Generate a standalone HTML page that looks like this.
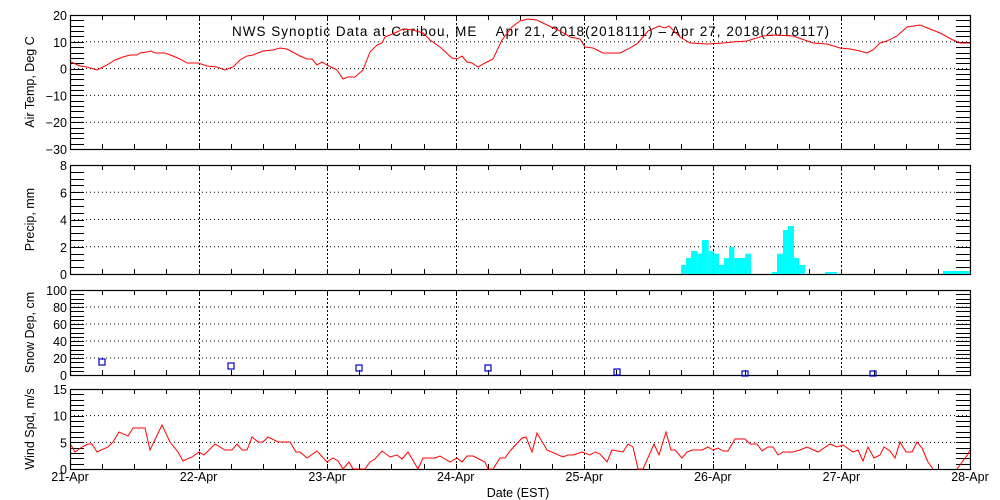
<!DOCTYPE html>
<html><head><meta charset="utf-8"><style>
html,body{margin:0;padding:0;background:#fff;}
svg{display:block;font-family:"Liberation Sans",sans-serif;}
text{font-size:12.5px;fill:#000;}
</style></head><body>
<svg id="s" width="1000" height="500" xmlns="http://www.w3.org/2000/svg">
<g id="g"></g>
<text x="232" y="36" style="font-size:13.5px;white-space:pre" xml:space="preserve" textLength="597" lengthAdjust="spacing">NWS Synoptic Data at Caribou, ME    Apr 21, 2018(2018111) – Apr 27, 2018(2018117)</text>
<polyline fill="none" stroke="#f00" stroke-width="1" points="71,62 80,66 87,67 97,70 107,65 115,60 123,57 130,55 137,55 140,53 147,52 151,51 155,53 165,53 173,56 180,59 187,63 198,63 207,66 217,67 225,70 233,67 240,60 247,56 253,55 263,51 273,50 280,48 287,49 300,56 307,59 312,59 317,65 322,62 327,65 337,70 343,79 348,77 355,77 363,70 370,52 377,45 382,43 385,37 397,32 403,29 413,30 423,33 430,40 440,47 452,58 457,59 462,56 467,62 472,63 478,67 485,63 493,59 502,40 512,27 520,21 528,19 537,20 547,25 560,31 570,37 580,39 585,47 593,48 603,53 620,53 630,48 638,43 648,31 659,26 665,28 669,26 680,37 690,43 707,44 723,43 733,42 747,41 763,36 773,35 793,36 813,43 827,44 840,48 850,49 860,51 867,53 873,50 880,43 887,41 897,36 907,27 920,25 930,29 940,33 953,40 960,43 970,43"/>
<g fill="#00ffff" id="bars"></g>
<g fill="none" stroke="#0000cc" stroke-width="1.2">
<rect x="99" y="359" width="6" height="6"/><rect x="228" y="363" width="6" height="6"/><rect x="356" y="365" width="6" height="6"/><rect x="485" y="365" width="6" height="6"/><rect x="614" y="369" width="6" height="6"/><rect x="742" y="371" width="6" height="5"/><rect x="870" y="371" width="6" height="5"/>
</g>
<polyline fill="none" stroke="#f00" stroke-width="1" points="71,445 75,452 82,447 88,444 92,444 97,452 108,447 113,442 119,432 128,436 133,428 145,428 150,450 162,425 170,442 178,452 183,461 192,457 199,452 204,455 215,444 225,450 232,450 237,444 242,450 247,450 252,437 258,442 263,442 268,437 278,442 290,442 296,452 300,452 307,458 317,451 327,462 333,458 338,461 343,469 349,462 353,469 365,469 370,462 375,459 382,451 390,457 397,455 402,459 408,452 418,469 423,458 435,458 440,456 450,462 457,458 462,462 467,456 473,456 485,462 488,469 493,469 500,458 505,458 510,451 522,438 526,437 532,452 537,433 547,450 563,457 568,455 573,455 582,452 590,455 595,452 600,454 607,462 612,450 623,452 628,444 633,447 638,469 643,469 654,444 659,455 666,432 671,450 675,450 682,458 687,452 692,450 702,450 708,447 713,450 718,448 723,451 728,451 735,439 745,439 750,444 757,444 762,451 768,447 773,447 778,455 783,452 793,452 800,450 807,447 818,452 830,444 837,447 843,445 853,452 858,450 863,461 868,447 874,458 880,455 884,447 890,451 895,458 900,442 906,452 912,452 917,442 922,448 928,462 933,469"/>
<polyline fill="none" stroke="#f00" points="957,469 968,454 970,450"/>
<text x="518" y="497" text-anchor="middle">Date (EST)</text>
</svg>
<script>
var g=document.getElementById('g'),NS='http://www.w3.org/2000/svg';
function el(t,a,txt){var e=document.createElementNS(NS,t);for(var k in a)e.setAttribute(k,a[k]);if(txt!==undefined)e.textContent=txt;g.appendChild(e);return e;}
var X0=70,X1=970,D=(X1-X0)/7;
var panels=[
 {t:15,b:149,min:-30,max:20,minor:2,major:[20,10,0,-10,-20,-30],lab:"Air Temp, Deg C"},
 {t:165,b:274,min:0,max:8,minor:0.5,major:[8,6,4,2,0],lab:"Precip, mm"},
 {t:290,b:375,min:0,max:100,minor:5,major:[100,80,60,40,20,0],lab:"Snow Dep, cm"},
 {t:389,b:469,min:0,max:15,minor:1,major:[15,10,5,0],lab:"Wind Spd, m/s"}];
panels.forEach(function(p){
 function Y(v){return p.b-(v-p.min)/(p.max-p.min)*(p.b-p.t);}
 p.major.forEach(function(v){if(v==p.min||v==p.max)return;var y=Y(v);el('line',{x1:X0,x2:X1,y1:y,y2:y,stroke:'#000','stroke-dasharray':'1 3','stroke-width':1});});
 for(var k=1;k<7;k++){var x=Math.round(X0+k*D)+0.5;el('line',{x1:x,x2:x,y1:p.t,y2:p.b,stroke:'#000','stroke-dasharray':'2 2','stroke-width':1});}
 for(var v=p.min;v<=p.max+1e-6;v+=p.minor){var y=Math.round(Y(v))+0.5;el('line',{x1:X0,x2:X0+14,y1:y,y2:y,stroke:'#000'});el('line',{x1:X1-14,x2:X1,y1:y,y2:y,stroke:'#000'});}
 for(var h=1;h<28;h++){var x=Math.round(X0+h*D/4)+0.5;el('line',{x1:x,x2:x,y1:p.b,y2:p.b-5,stroke:'#000'});el('line',{x1:x,x2:x,y1:p.t,y2:p.t+5,stroke:'#000'});}
 el('rect',{x:X0+0.5,y:p.t+0.5,width:X1-X0,height:p.b-p.t,fill:'none',stroke:'#000','stroke-width':1.2});
 p.major.forEach(function(v){var s=(v<0?'\u2212'+(-v):''+v);el('text',{x:X0-3,y:Y(v)+5,'text-anchor':'end'},s);});
 var cy=(p.t+p.b)/2;el('text',{x:34,y:cy,'text-anchor':'middle',transform:'rotate(-90 34 '+cy+')'},p.lab);
});
var days=['21-Apr','22-Apr','23-Apr','24-Apr','25-Apr','26-Apr','27-Apr','28-Apr'];
days.forEach(function(d,i){el('text',{x:X0+i*D,y:481,'text-anchor':'middle'},d);});
var bars=[[63,78,135],[78,93,114],[93,113,93],[113,126,101],[126,146,60],[146,161,93],[161,177,101],[177,192,135],[192,207,114],[207,223,81],[223,256,114],[256,273,101],[336,351,156],[351,369,101],[369,384,30],[384,402,18],[402,418,114],[418,435,135],[495,531,156]];
var bg=document.getElementById('bars');
bars.forEach(function(b){var r=document.createElementNS(NS,'rect');var x=660+b[0]/3,w=(b[1]-b[0])/3,y=220+b[2]/3;r.setAttribute('x',x);r.setAttribute('y',y);r.setAttribute('width',w);r.setAttribute('height',274-y);bg.appendChild(r);});
var r=document.createElementNS(NS,'rect');r.setAttribute('x',943);r.setAttribute('y',271);r.setAttribute('width',27);r.setAttribute('height',3);bg.appendChild(r);
document.getElementById('s').appendChild(bg);
</script>
</body></html>
